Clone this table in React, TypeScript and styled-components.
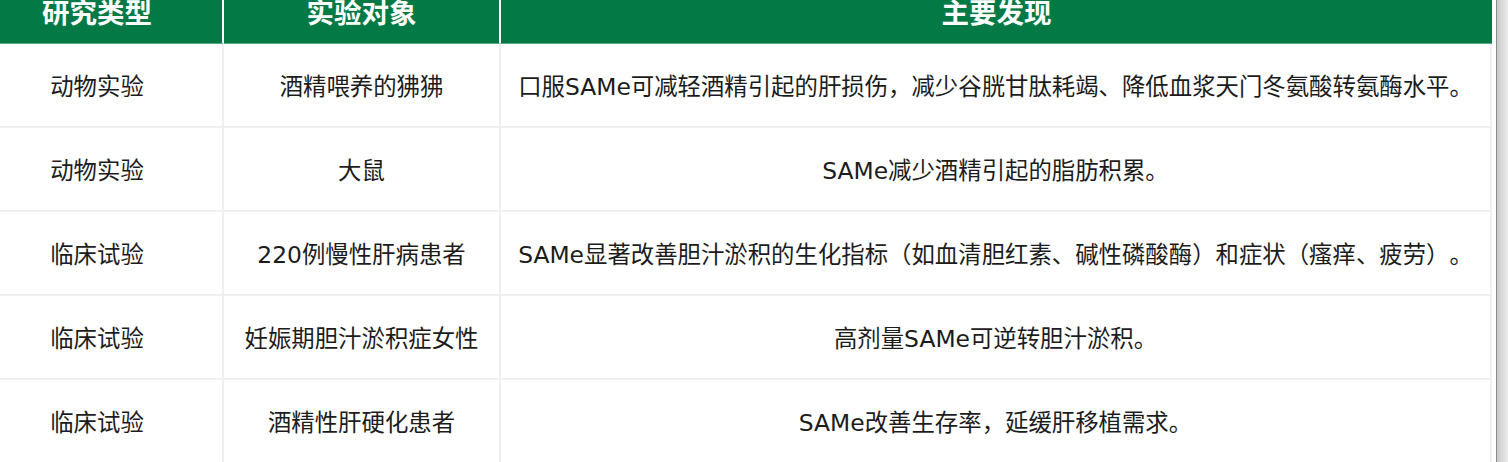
import styled, { createGlobalStyle } from "styled-components";

const GlobalStyle = createGlobalStyle`
  html, body {
    margin: 0;
    padding: 0;
    background: #ffffff;
    overflow: hidden;
  }
  body {
    font-family: "DejaVu Sans", "Noto Sans CJK SC", sans-serif;
    text-spacing-trim: space-all;
  }
`;

const rows: Study[] = [
  {
    type: "动物实验",
    subject: "酒精喂养的狒狒",
    finding:
      "口服SAMe可减轻酒精引起的肝损伤，减少谷胱甘肽耗竭、降低血浆天门冬氨酸转氨酶水平。",
  },
  { type: "动物实验", subject: "大鼠", finding: "SAMe减少酒精引起的脂肪积累。" },
  {
    type: "临床试验",
    subject: "220例慢性肝病患者",
    finding:
      "SAMe显著改善胆汁淤积的生化指标（如血清胆红素、碱性磷酸酶）和症状（瘙痒、疲劳）。",
  },
  {
    type: "临床试验",
    subject: "妊娠期胆汁淤积症女性",
    finding: "高剂量SAMe可逆转胆汁淤积。",
  },
  {
    type: "临床试验",
    subject: "酒精性肝硬化患者",
    finding: "SAMe改善生存率，延缓肝移植需求。",
  },
];

const App = () => (
  <>
    <GlobalStyle />
    <Page>
      <TableArea>
        <Table>
          <colgroup>
            <col style={{ width: 252 }} />
            <col style={{ width: 277 }} />
            <col />
          </colgroup>
          <thead>
            <tr>
              <Th>研究类型</Th>
              <Th>实验对象</Th>
              <Th>主要发现</Th>
            </tr>
          </thead>
          <tbody>
            {rows.map((r, i) => (
              <tr key={"row-" + i}>
                <Td>{r.type}</Td>
                <Td>{r.subject}</Td>
                <Td>{r.finding}</Td>
              </tr>
            ))}
          </tbody>
        </Table>
      </TableArea>
      <Scrollbar />
    </Page>
  </>
);

const Page = styled.div`
  display: flex;
  width: 1508px;
  height: 462px;
  overflow: hidden;
`;

// the table is scrolled a little: its top and left edges lie outside the view
const TableArea = styled.div`
  flex: 0 0 1496px;
  margin-top: -22px;
`;

const Table = styled.table`
  width: 1520px;
  margin-left: -28px;
  border-collapse: separate;
  border-spacing: 0;
  table-layout: fixed;
`;

const Th = styled.th`
  height: 66px;
  padding: 0 12px;
  box-sizing: border-box;
  background: #037a45;
  color: #ffffff;
  font-family: "Noto Sans CJK SC", sans-serif;
  font-size: 27.5px;
  font-weight: 700;
  text-align: center;
  border-right: 2px solid #ffffff;
  border-bottom: 1px solid #5aa883;
  &:last-child {
    border-right: none;
  }
`;

const Td = styled.td`
  height: 84px;
  padding: 0 12px;
  box-sizing: border-box;
  color: #1c1c1c;
  font-size: 23.4px;
  text-align: center;
  vertical-align: middle;
  border-right: 2px solid #f0f0f0;
  border-bottom: 2px solid #f0f0f0;
  white-space: nowrap;
`;

const Scrollbar = styled.div`
  flex: 1;
  border-left: 1px solid #8a8a8a;
  background: linear-gradient(to right, #c9c9c9, #ececec);
`;

interface Study {
  type: string;
  subject: string;
  finding: string;
}

export default App;
